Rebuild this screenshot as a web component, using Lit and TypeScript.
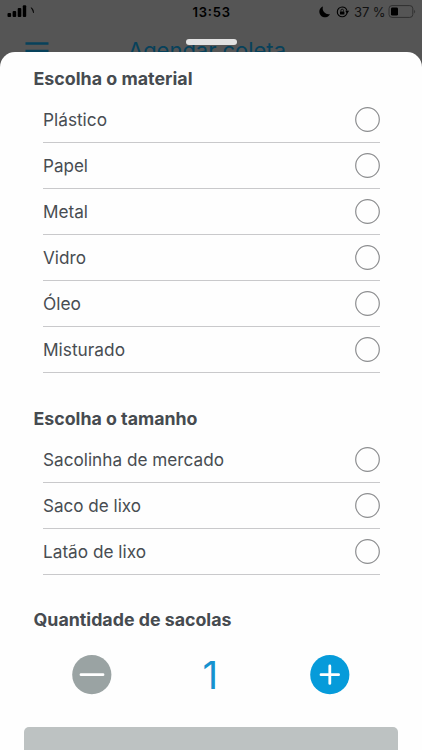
import { LitElement, html, css, svg } from "lit";
import { customElement, property, state } from "lit/decorators.js";

@customElement("status-bar")
class StatusBar extends LitElement {
  static styles = css`
    :host { display: block; height: 24px; color: #000; }
    svg { display: block; }
    text { font-family: Inter, "Liberation Sans", sans-serif; font-size: 13px; }
    .time { font-weight: 600; }
    .percent { fill: #111; }
  `;
  render() {
    return html`<svg width="422" height="24" viewBox="0 0 422 24">
      <rect x="7.5" y="13" width="3.6" height="4" rx="1" />
      <rect x="12.6" y="11" width="3.6" height="6" rx="1" />
      <rect x="17.7" y="8" width="3.6" height="9" rx="1" />
      <rect x="22.8" y="5.3" width="3.4" height="11.7" rx="1" />
      <path d="M31 7.6 Q33.6 8.4 33.6 13 Q32.8 10 31 7.6 Z" stroke="#000" stroke-width=".5" />
      <text class="time" x="192.5" y="17" textLength="37.5">13:53</text>
      <path d="M323 6.4 A5.6 5.6 0 1 0 330 14 A5.9 5.9 0 0 1 323 6.4 Z" />
      <circle cx="342.2" cy="11.9" r="4.9" fill="none" stroke="#000" stroke-width="1.1" stroke-dasharray="28.6 2.2" />
      <path d="M345.2 10.8 h4 l-2 2.6 Z" />
      <rect x="340" y="11.4" width="4.4" height="3.2" rx=".5" />
      <path d="M340.9 11.6 V10.5 a1.3 1.3 0 0 1 2.6 0 V11.6" fill="none" stroke="#000" stroke-width=".8" />
      <text class="percent" x="354" y="17" textLength="31.5">37 %</text>
      <rect x="389" y="5.6" width="23.8" height="11.8" rx="3" fill="none" stroke="#303030" stroke-width="1" />
      <rect x="391" y="7.4" width="7" height="8.2" rx="1.4" />
      <path d="M414.2 9.7 Q416.2 11.6 414.2 13.5 Z" fill="#303030" />
    </svg>`;
  }
}

@customElement("option-list")
class OptionList extends LitElement {
  static styles = css`
    :host { display: block; margin: 0 42.5px 0 42.5px; }
    .row {
      display: flex; align-items: center; justify-content: space-between;
      box-sizing: border-box; height: 46px; border-bottom: 1px solid #c9c9cb;
      cursor: pointer;
    }
    .label { display: block; }
    .label text { font: 400 17.5px Inter, "Liberation Sans", sans-serif; fill: #484d52; }
    .radio { display: block; flex: none; }
    .radio circle { fill: none; stroke: #8d8e90; stroke-width: 1.2; }
    .radio.on circle { fill: #069bda; }
  `;
  @property({ attribute: false }) options: [string, number][] = [];
  @state() picked = -1;
  render() {
    return this.options.map(([name, width], i) => html`
      <div class="row" @click=${() => (this.picked = i)}>
        <svg class="label" width="240" height="45"><text x="0" y="29" lengthAdjust="spacingAndGlyphs" textLength=${width}>${name}</text></svg>
        <svg class="radio ${this.picked === i ? "on" : ""}" width="25" height="25"><circle cx="12.5" cy="12.5" r="11.8" /></svg>
      </div>`);
  }
}

@customElement("app-root")
class AppRoot extends LitElement {
  static styles = css`
    :host {
      display: flex; flex-direction: column; position: relative;
      width: 422px; height: 750px; overflow: hidden; background: #555;
      font-family: Inter, "Liberation Sans", sans-serif;
    }
    .nav { display: block; height: 44px; margin-bottom: -16px; flex: none; }
    .nav text { font: 400 22px Inter, "Liberation Sans", sans-serif; fill: #07415b; }
    .sheet {
      flex: 1; min-height: 0; overflow: hidden; background: #fefefe; position: relative;
      border-radius: 15px 15px 0 0; display: flex; flex-direction: column;
    }
    .grip {
      position: absolute; left: 185.5px; top: 39px; width: 51px; height: 6px;
      border-radius: 3px; background: #e2e2e2;
    }
    .heading { display: block; height: 45px; flex: none; }
    .heading.later { margin-top: 19px; }
    .heading text { font: 700 17.5px Inter, "Liberation Sans", sans-serif; fill: #464b50; }
    .stepper {
      display: flex; align-items: center; justify-content: space-between;
      margin: 16px 71.5px 0 72px; height: 40px; flex: none;
    }
    .round { all: unset; display: block; width: 40px; height: 40px; cursor: pointer; }
    .round svg { display: block; }
    .count { font-size: 38.5px; line-height: 40px; color: #1692cf; font-weight: 400; margin-right: 2px; }
    .submit {
      margin: 32px 24px 0; height: 48px; flex: none; border-radius: 5px;
      background: #bdc2c2;
    }
  `;
  @state() count = 1;

  heading(label: string, width: number, baseline = 33, later = false) {
    return html`<svg class="heading ${later ? "later" : ""}" width="422" height="45">
      <text x="33.5" y=${baseline} lengthAdjust="spacingAndGlyphs" textLength=${width}>${label}</text></svg>`;
  }

  sign(fill: string, d: string) {
    return html`<svg width="40" height="40"><circle cx="19.8" cy="19.7" r="19.6" fill=${fill} />
      ${svg`<path d=${d} stroke="#fff" stroke-width="2.8" stroke-linecap="round" fill="none" />`}</svg>`;
  }

  render() {
    return html`
      <status-bar></status-bar>
      <svg class="nav" width="422" height="44">
        <path d="M25.5 19.5 H48.5 M25.5 27 H48.5" stroke="#07415b" stroke-width="2.4" />
        <text x="128" y="33.5" textLength="158">Agendar coleta</text>
      </svg>
      <div class="sheet">
        ${this.heading("Escolha o material", 159)}
        <option-list .options=${[["Plástico", 64], ["Papel", 45], ["Metal", 45], ["Vidro", 43], ["Óleo", 38], ["Misturado", 82]]}></option-list>
        ${this.heading("Escolha o tamanho", 164, 32.5, true)}
        <option-list .options=${[["Sacolinha de mercado", 181], ["Saco de lixo", 98], ["Latão de lixo", 103]]}></option-list>
        ${this.heading("Quantidade de sacolas", 198, 32, true)}
        <div class="stepper">
          <button class="round" aria-label="Menos" @click=${() => (this.count = Math.max(1, this.count - 1))}>${this.sign("#9aa3a3", "M9 19.7 H31")}</button>
          <span class="count">${this.count}</span>
          <button class="round" aria-label="Mais" @click=${() => this.count++}>${this.sign("#069bda", "M11 19.7 H28.6 M19.8 11 V28.4")}</button>
        </div>
        <div class="submit"></div>
      </div>
      <div class="grip"></div>
    `;
  }
}
